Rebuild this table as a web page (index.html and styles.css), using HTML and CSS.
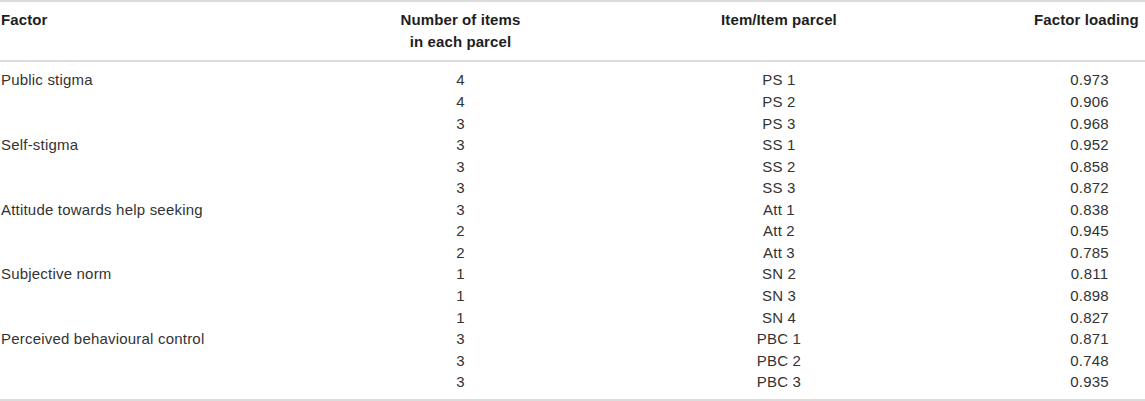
FILE: index.html
```html
<!DOCTYPE html>
<html lang="en">
<head>
<meta charset="utf-8">
<title>Factor loadings</title>
<link rel="stylesheet" href="styles.css">
</head>
<body>
<table class="loadings">
  <colgroup>
    <col class="c-factor">
    <col class="c-num">
    <col class="c-item">
    <col class="c-load">
  </colgroup>
  <thead>
    <tr>
      <th class="factor">Factor</th>
      <th class="num">Number of items<br>in each parcel</th>
      <th class="item">Item/Item parcel</th>
      <th class="load load-head">Factor loading</th>
    </tr>
  </thead>
  <tbody>
    <tr class="first"><td class="factor">Public stigma</td><td class="num">4</td><td class="item">PS 1</td><td class="load">0.973</td></tr>
    <tr><td class="factor"></td><td class="num">4</td><td class="item">PS 2</td><td class="load">0.906</td></tr>
    <tr><td class="factor"></td><td class="num">3</td><td class="item">PS 3</td><td class="load">0.968</td></tr>
    <tr><td class="factor">Self-stigma</td><td class="num">3</td><td class="item">SS 1</td><td class="load">0.952</td></tr>
    <tr><td class="factor"></td><td class="num">3</td><td class="item">SS 2</td><td class="load">0.858</td></tr>
    <tr><td class="factor"></td><td class="num">3</td><td class="item">SS 3</td><td class="load">0.872</td></tr>
    <tr><td class="factor">Attitude towards help seeking</td><td class="num">3</td><td class="item">Att 1</td><td class="load">0.838</td></tr>
    <tr><td class="factor"></td><td class="num">2</td><td class="item">Att 2</td><td class="load">0.945</td></tr>
    <tr><td class="factor"></td><td class="num">2</td><td class="item">Att 3</td><td class="load">0.785</td></tr>
    <tr><td class="factor">Subjective norm</td><td class="num">1</td><td class="item">SN 2</td><td class="load">0.811</td></tr>
    <tr><td class="factor"></td><td class="num">1</td><td class="item">SN 3</td><td class="load">0.898</td></tr>
    <tr><td class="factor"></td><td class="num">1</td><td class="item">SN 4</td><td class="load">0.827</td></tr>
    <tr><td class="factor">Perceived behavioural control</td><td class="num">3</td><td class="item">PBC 1</td><td class="load">0.871</td></tr>
    <tr><td class="factor"></td><td class="num">3</td><td class="item">PBC 2</td><td class="load">0.748</td></tr>
    <tr class="last"><td class="factor"></td><td class="num">3</td><td class="item">PBC 3</td><td class="load">0.935</td></tr>
  </tbody>
</table>
</body>
</html>
```
FILE: styles.css
```css
html, body {
  margin: 0;
  padding: 0;
  background: #ffffff;
}

.loadings {
  width: 1145px;
  border-collapse: collapse;
  table-layout: fixed;
  font-family: "Liberation Sans", Arial, Helvetica, sans-serif;
  font-size: 15px;
  letter-spacing: 0.2px;
  color: #333333;
  border-top: 2px solid #dcdcdc;
  border-bottom: 2px solid #dcdcdc;
}

.c-factor { width: 310px; }
.c-num { width: 301px; }
.c-item { width: 423px; }
.c-load { width: 111px; }

.loadings th,
.loadings td {
  padding: 0;
  line-height: 21.57px;
  vertical-align: top;
  white-space: nowrap;
}

.loadings thead th {
  font-weight: bold;
  color: #1e1e1e;
  letter-spacing: 0.1px;
  padding-top: 7px;
  padding-bottom: 8px;
  line-height: 21.5px;
  border-bottom: 2px solid #dcdcdc;
}

.loadings .factor {
  text-align: left;
  padding-left: 1px;
}

.loadings .num {
  text-align: center;
}

.loadings .item {
  text-align: center;
  padding-right: 87px;
}

.loadings .load {
  text-align: center;
}

.loadings .load-head {
  text-align: right;
  padding-right: 10px;
}

.loadings tr.first td {
  padding-top: 7.4px;
}

.loadings tr.last td {
  padding-bottom: 6px;
}
```
